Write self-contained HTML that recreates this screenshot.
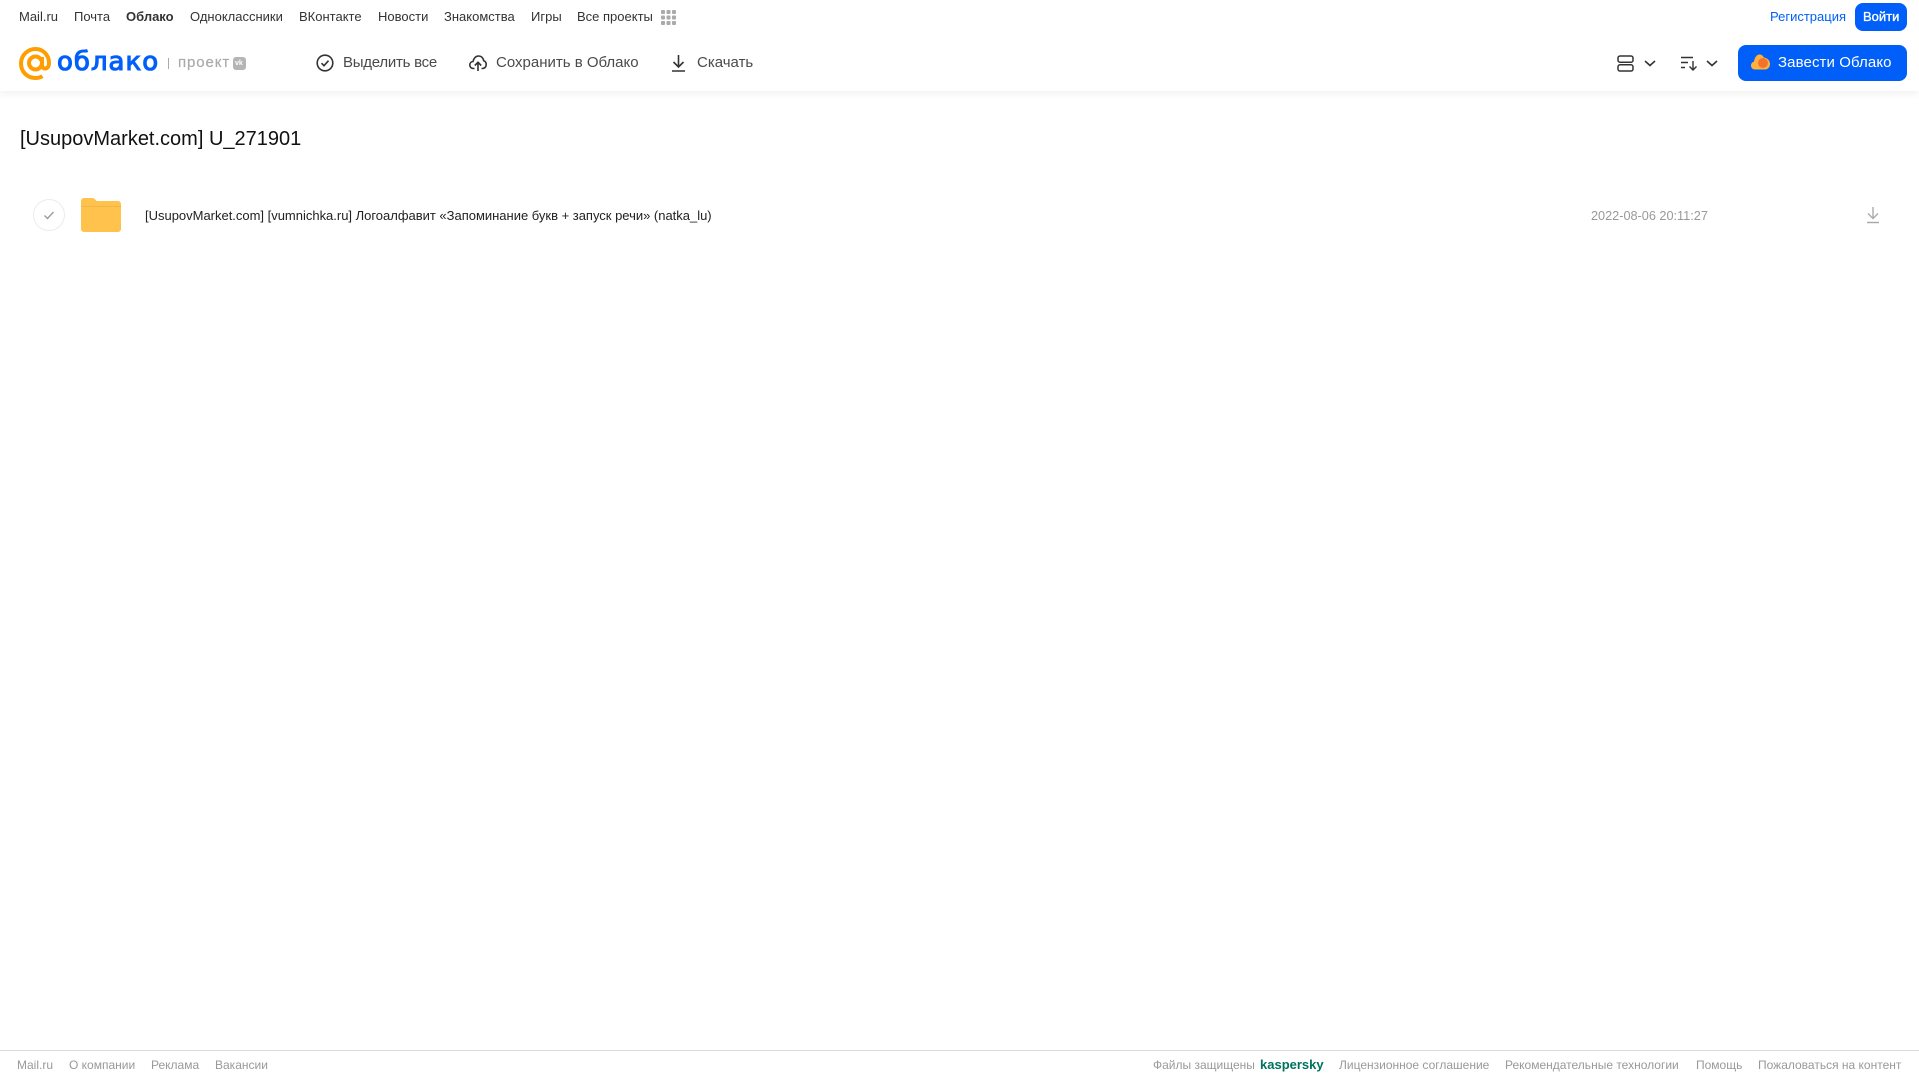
<!DOCTYPE html>
<html lang="ru"><head><meta charset="utf-8"><title>Облако</title>
<style>
html,body{margin:0;padding:0;background:#fff;width:1919px;height:1079px;overflow:hidden}
body{position:relative;font-family:"Liberation Sans",Arial,sans-serif}
.t{position:absolute;white-space:nowrap;line-height:20px}
.n{top:7px;font-size:13px;color:#333}
.b{top:53px;font-size:15px;color:#4a4a4a}
.f{top:1055px;font-size:12px;color:#999}
svg{position:absolute;overflow:visible}
#hdr{position:absolute;left:0;top:0;width:1919px;height:91px;background:#fff;box-shadow:0 2px 8px rgba(0,0,0,.07)}
</style></head><body>
<div id="hdr"></div>
<span class="t n" style="left:19px">Mail.ru</span>
<span class="t n" style="left:74px">Почта</span>
<span class="t n" style="left:126px;font-weight:bold">Облако</span>
<span class="t n" style="left:190px">Одноклассники</span>
<span class="t n" style="left:299px">ВКонтакте</span>
<span class="t n" style="left:378px">Новости</span>
<span class="t n" style="left:444px">Знакомства</span>
<span class="t n" style="left:531px">Игры</span>
<span class="t n" style="left:577px">Все проекты</span>
<svg style="left:661px;top:10px" width="15" height="15" fill="#aaa"><rect x="0" y="0" width="4" height="4" rx="1"/><rect x="5.500" y="0" width="4" height="4" rx="1"/><rect x="11" y="0" width="4" height="4" rx="1"/><rect x="0" y="5.500" width="4" height="4" rx="1"/><rect x="5.500" y="5.500" width="4" height="4" rx="1"/><rect x="11" y="5.500" width="4" height="4" rx="1"/><rect x="0" y="11" width="4" height="4" rx="1"/><rect x="5.500" y="11" width="4" height="4" rx="1"/><rect x="11" y="11" width="4" height="4" rx="1"/></svg>
<span class="t n" style="left:1770px;color:#005ff9">Регистрация</span>
<div style="position:absolute;left:1855px;top:3px;width:52px;height:28px;border-radius:8px;background:#005ff9"></div>
<span class="t n" style="left:1863px;color:#fff;-webkit-text-stroke:.35px #fff">Войти</span>

<!-- logo -->
<svg style="left:19px;top:47px" width="33" height="33" viewBox="0 0 33 33" fill="none" stroke="#ff9e00" stroke-width="4"><circle cx="16.500" cy="16" r="6.500"/><path d="M23 10v8c0 5 7 5 7-2C30 8 24 2 16.500 2S2 8 2 16.500 8.500 31 16.500 31c3 0 5-.6 7-1.800"/></svg>
<span class="t" style="left:57px;top:44px;font-size:26px;line-height:36px;color:#005ff9;font-family:'DejaVu Sans',sans-serif;-webkit-text-stroke:1.100px #005ff9;letter-spacing:1px">облако</span>
<div style="position:absolute;left:168px;top:58px;width:1px;height:11px;background:#aaa"></div>
<span class="t" style="left:178px;top:53px;font-size:15px;color:#aaa;-webkit-text-stroke:.2px #aaa;letter-spacing:.9px">проект</span>
<div style="position:absolute;left:233px;top:57px;width:13px;height:13px;border-radius:3px;background:#b5b5b5"></div>
<span class="t" style="left:235px;top:58px;font-size:7px;line-height:11px;color:#fff;font-weight:bold">vk</span>

<!-- toolbar -->
<svg style="left:316px;top:54px" width="18" height="18" fill="none" stroke="#333" stroke-width="1.600"><circle cx="9" cy="9" r="7.800"/><path d="M5.500 9.200l2.500 2.500 4.500-5"/></svg>
<span class="t b" style="left:343px;letter-spacing:-.25px">Выделить все</span>
<svg style="left:469px;top:54px" width="18" height="18" viewBox="0 0 18 18" fill="none" stroke="#333" stroke-width="1.600"><path d="M5.500 14.500H4.500C2 14.500 .8 12.800 .8 11c0-2 1.400-3.400 3.200-3.500C4.600 4.200 6.800 2 9.500 2c2.800 0 4.800 2 5.200 4.700 1.500.5 2.500 2 2.500 3.800 0 2.200-1.500 4-3.700 4H12.500"/><path d="M9 17V8.500M5.800 11.500L9 8.300l3.200 3.200"/></svg>
<span class="t b" style="left:496px">Сохранить в Облако</span>
<svg style="left:671px;top:54px" width="15" height="18" fill="none" stroke="#333" stroke-width="1.600"><path d="M7.500 1v11.500M2.500 8l5 5 5-5M1 17h13"/></svg>
<span class="t b" style="left:697px">Скачать</span>

<svg style="left:1617px;top:55px" width="17" height="17" fill="none" stroke="#333" stroke-width="1.500"><rect x="1" y="1" width="15" height="6.200" rx="2"/><rect x="1" y="9.800" width="15" height="6.200" rx="2"/></svg>
<svg style="left:1644px;top:60px" width="12" height="7" fill="none" stroke="#333" stroke-width="1.600"><path d="M1 1l5 4.500L11 1"/></svg>
<svg style="left:1681px;top:56px" width="17" height="15" fill="none" stroke="#333" stroke-width="1.400"><path d="M0 1.500h12M0 6.500h7M0 11.500h4M12 5v9M8.500 10.500l3.500 3.500 3.500-3.500"/></svg>
<svg style="left:1706px;top:60px" width="12" height="7" fill="none" stroke="#333" stroke-width="1.600"><path d="M1 1l5 4.500L11 1"/></svg>
<div style="position:absolute;left:1738px;top:45px;width:169px;height:36px;border-radius:8px;background:#005ff9"></div>
<svg style="left:1751px;top:54px" width="19" height="16" viewBox="0 0 19 16"><path d="M4 15.500C1.800 15.500 0 13.800 0 11.500 0 9.500 1.300 8 3 7.600 3.500 3.500 6 .5 8.500.5c2 0 3.500 1.200 4.300 3C16.500 4 19 6.500 19 10c0 3-2 5.500-5 5.500z" fill="#ffb13d"/><circle cx="12" cy="9" r="5" fill="#f4722b"/></svg>
<span class="t b" style="left:1778px;color:#fff;letter-spacing:.1px">Завести Облако</span>

<!-- content -->
<span class="t" style="left:20px;top:127px;font-size:20px;line-height:24px;color:#111">[UsupovMarket.com] U_271901</span>
<svg style="left:33px;top:199px" width="32" height="32" fill="none"><circle cx="16" cy="16" r="15.500" stroke="#ececec"/><path d="M11.500 16.500l3 3 6-6.500" stroke="#999" stroke-width="1.300"/></svg>
<svg style="left:81px;top:198px" width="40" height="34" viewBox="0 0 40 34"><path d="M0 3a3 3 0 0 1 3-3h8c2 0 3 1 4 2.500l.7.500H37a3 3 0 0 1 3 3v25a3 3 0 0 1-3 3H3a3 3 0 0 1-3-3z" fill="#ffc24d"/><path d="M0 9h40v-1H0z" fill="#f5b544"/></svg>
<span class="t" style="left:145px;top:206px;font-size:13px;color:#222;letter-spacing:-.01px">[UsupovMarket.com] [vumnichka.ru] Логоалфавит «Запоминание букв + запуск речи» (natka_lu)</span>
<span class="t" style="left:1591px;top:206px;font-size:12.700px;color:#999">2022-08-06 20:11:27</span>
<svg style="left:1866px;top:206px" width="14" height="18" fill="none" stroke="#aaa" stroke-width="1.400"><path d="M7 1v11M2 7.500l5 5 5-5M1 16.500h12"/></svg>

<!-- footer -->
<div style="position:absolute;left:0;top:1050px;width:1919px;height:1px;background:#d9d9d9"></div>
<span class="t f" style="left:17px">Mail.ru</span>
<span class="t f" style="left:69px">О компании</span>
<span class="t f" style="left:151px">Реклама</span>
<span class="t f" style="left:215px">Вакансии</span>
<span class="t f" style="left:1153px">Файлы защищены</span>
<span class="t f" style="left:1260px;color:#00725d;font-weight:bold;font-size:13px">kaspersky</span>
<span class="t f" style="left:1339px">Лицензионное соглашение</span>
<span class="t f" style="left:1505px">Рекомендательные технологии</span>
<span class="t f" style="left:1696px">Помощь</span>
<span class="t f" style="left:1758px">Пожаловаться на контент</span>
</body></html>
